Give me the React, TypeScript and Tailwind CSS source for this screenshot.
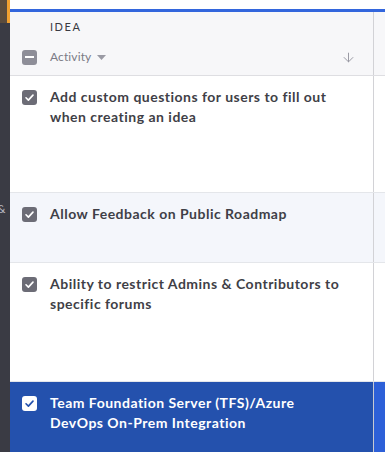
import { ArrowDown } from "lucide-react";

const rows = [
  { title: ["Add custom questions for users to fill out", "when creating an idea"], h: "h-[117px]", bg: "bg-white", selected: false },
  { title: ["Allow Feedback on Public Roadmap"], h: "h-[70px]", bg: "bg-[#f4f6fb]", selected: false },
  { title: ["Ability to restrict Admins & Contributors to", "specific forums"], h: "h-[119px]", bg: "bg-white", selected: false },
  { title: ["Team Foundation Server (TFS)/Azure", "DevOps On-Prem Integration"], h: "h-[80px]", bg: "bg-[#2451ad]", selected: true },
];

const Check = ({ selected }: { selected: boolean }) => (
  <div
    className={`w-[15px] h-[15px] rounded-[3px] flex items-center justify-center shrink-0 ${
      selected ? "bg-white" : "bg-[#6c6c76]"
    }`}
  >
    <svg width="11" height="11" viewBox="0 0 12 12" fill="none">
      <path
        d="M2.2 6.3l2.6 2.5 5-5.4"
        stroke={selected ? "#2451ad" : "#ffffff"}
        strokeWidth="1.8"
        strokeLinecap="round"
        strokeLinejoin="round"
      />
    </svg>
  </div>
);

export default function App() {
  return (
    <div className="flex w-[385px] h-[452px] overflow-hidden bg-white font-['Lato',sans-serif]">
      {/* left app rail, mostly cut off */}
      <div className="w-[10px] shrink-0 flex flex-col bg-[#3a3b44] overflow-hidden">
        <div className="h-[23px] shrink-0 flex">
          <div className="w-[7px] bg-[#5b4c3d]" />
          <div className="w-[3px] bg-[#f0a030]" />
        </div>
        <span className="mt-[180px] -ml-[3px] text-[12px] leading-none text-[#b8b8c0]">&amp;</span>
      </div>

      <div className="flex-1 flex flex-col">
        <div className="h-[9px] shrink-0 bg-white" />
        <div className="h-[3px] shrink-0 bg-[#3366dd]" />

        {/* header */}
        <div className="flex shrink-0 h-[64px] bg-[#f7f7f9] border-b border-[#dedee2]">
          <div className="w-[364px] border-r border-[#d2d2d6] flex flex-col pl-[12px] pr-[17px]">
            <div className="pl-[28px] pt-[8px] text-[11px] leading-[14px] tracking-[0.14em] text-[#3a3a42]">IDEA</div>
            <div className="flex items-center mt-[14px]">
              <div className="w-[15px] h-[15px] rounded-[3px] bg-[#8e8e98] flex items-center justify-center">
                <div className="w-[9px] h-[2px] bg-white" />
              </div>
              <span className="ml-[13px] text-[12px] tracking-[0.01em] text-[#7b7b86]">Activity</span>
              <svg className="ml-[6px]" width="9" height="5" viewBox="0 0 9 5">
                <path d="M0 0h9L4.5 5z" fill="#9a9aa4" />
              </svg>
              <ArrowDown className="ml-auto text-[#9a9aa4]" size={15} strokeWidth={1.6} />
            </div>
          </div>
          <div className="flex-1" />
        </div>

        {/* rows */}
        {rows.map((r, i) => (
          <div
            key={i}
            className={`flex shrink-0 ${r.h} ${r.bg} ${i < rows.length - 1 ? "border-b border-[#e4e6ea]" : ""}`}
          >
            <div
              className={`w-[364px] flex gap-[13px] pl-[12px] pt-[11px] border-r ${
                r.selected ? "border-[#c8cad2]" : "border-[#d2d2d6]"
              }`}
            >
              <div className="pt-[3px]">
                <Check selected={r.selected} />
              </div>
              <div
                className={`text-[14px] leading-[20px] font-bold tracking-[0.035em] ${
                  r.selected ? "text-white" : "text-[#3f3f47]"
                }`}
              >
                {r.title.map((t) => (
                  <div key={t}>{t}</div>
                ))}
              </div>
            </div>
            <div className={`flex-1 ${r.selected ? "bg-[#2d60d8]" : ""}`} />
          </div>
        ))}
      </div>
    </div>
  );
}
